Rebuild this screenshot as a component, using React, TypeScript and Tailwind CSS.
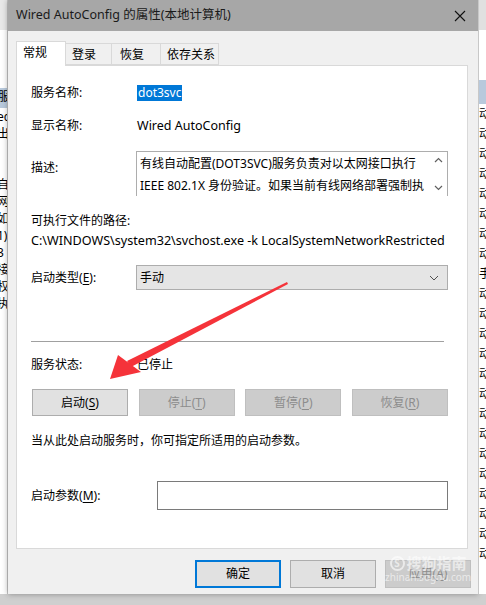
import React from "react";

const font = "font-['Noto_Sans','Noto_Sans_CJK_SC',sans-serif]";

function Key({ label, k }: { label: string; k: string }) {
  return (
    <>
      {label}(<span className="underline underline-offset-2">{k}</span>)
    </>
  );
}

function SvcButton({ children, disabled }: { children: React.ReactNode; disabled?: boolean }) {
  return (
    <div
      className={
        disabled
          ? "w-[96px] h-[27px] flex items-center justify-center bg-[#cccccc] border border-[#bfbfbf] text-[#8d8d8d]"
          : "w-[96px] h-[27px] flex items-center justify-center bg-[#e1e1e1] border border-[#adadad] text-black"
      }
    >
      {children}
    </div>
  );
}

const sideChars = ["服", "ec", "出", "", "", "自", "网", "如", "1)", "3", "接", "权", "执"];

export default function App() {
  return (
    <div className={`relative w-[486px] h-[605px] overflow-hidden bg-[#d6d6d6] text-[12px] text-black ${font}`}>
      <div className="flex h-[594px]">
        {/* window behind, left */}
        <div className="w-[8px] bg-white border-r border-[#c8c8c8] flex flex-col overflow-hidden text-[12px] leading-[17px]">
          <div className="h-[30px] bg-[#e8e8e8]" />
          <div className="h-[58px]" />
          <div className="h-[20px] bg-[#b8c9dc] -ml-[2px]">服</div>
          {sideChars.slice(1).map((c, i) => (
            <div key={i} className="-ml-[3px] whitespace-nowrap">{c || "\u00a0"}</div>
          ))}
        </div>

        {/* dialog */}
        <div className="w-[470px] flex flex-col bg-[#f0f0f0] shadow-[0_0_6px_rgba(0,0,0,0.35)]">
          <div className="h-[31px] bg-[#a7a7a7] flex items-center justify-between pl-[8px] pr-[8px] text-[12.5px] text-[#1a1a1a]">
            <span>Wired AutoConfig 的属性(本地计算机)</span>
            <svg width="12" height="12" viewBox="0 0 12 12" className="mr-[4px]">
              <path d="M1 1 L11 11 M11 1 L1 11" stroke="#111" strokeWidth="1.1" />
            </svg>
          </div>

          <div className="pl-[8px] pr-[10px] pt-[9px] flex flex-col">
            {/* tabs */}
            <div className="flex items-end h-[25px]">
              <div className="w-[50px] h-[25px] bg-white border border-b-0 border-[#d9d9d9] pl-[6px] pt-[2px] relative z-10 -mb-px">常规</div>
              <div className="w-[46px] h-[22px] border border-l-0 border-[#d9d9d9] pl-[6px] pt-[2px]">登录</div>
              <div className="w-[49px] h-[22px] border border-l-0 border-[#d9d9d9] pl-[8px] pt-[2px]">恢复</div>
              <div className="w-[58px] h-[22px] border border-l-0 border-[#d9d9d9] pl-[6px] pt-[2px]">依存关系</div>
            </div>

            {/* panel */}
            <div className="h-[484px] bg-white border border-[#d9d9d9] pl-[14px] pr-[19px] pt-[19px] flex flex-col">
              <div className="flex h-[16px] items-center">
                <div className="w-[106px]">服务名称:</div>
                <span className="bg-[#0078d7] text-white px-[1px] leading-[16px]">dot3svc</span>
              </div>
              <div className="flex h-[16px] items-center mt-[17px]">
                <div className="w-[106px]">显示名称:</div>
                <span className="text-[12.5px]">Wired AutoConfig</span>
              </div>
              <div className="flex mt-[17px]">
                <div className="w-[105px] pt-[8px]">描述:</div>
                <div className="flex-1 h-[45px] border border-[#adadad] border-b-0 flex overflow-hidden">
                  <div className="flex-1 pl-[3px] pt-[1px] leading-[22px] whitespace-nowrap overflow-hidden">
                    <div>有线自动配置(DOT3SVC)服务负责对以太网接口执行</div>
                    <div>IEEE 802.1X 身份验证。如果当前有线网络部署强制执</div>
                  </div>
                  <div className="w-[17px] flex flex-col items-center justify-between py-[5px]">
                    <svg width="9" height="6" viewBox="0 0 9 6">
                      <path d="M1 5 L4.5 1.5 L8 5" fill="none" stroke="#606060" strokeWidth="1.2" />
                    </svg>
                    <svg width="9" height="6" viewBox="0 0 9 6">
                      <path d="M1 1 L4.5 4.5 L8 1" fill="none" stroke="#606060" strokeWidth="1.2" />
                    </svg>
                  </div>
                </div>
              </div>
              <div className="h-[16px] flex items-center mt-[17px]">可执行文件的路径:</div>
              <div className="h-[16px] flex items-center mt-[4px] whitespace-nowrap text-[12.6px]">
                C:\WINDOWS\system32\svchost.exe -k LocalSystemNetworkRestricted
              </div>
              <div className="flex items-center mt-[16px]">
                <div className="w-[105px]">
                  <Key label="启动类型" k="E" />:
                </div>
                <div className="flex-1 h-[25px] bg-[#e5e5e5] border border-[#adadad] flex items-center justify-between pl-[3px] pr-[8px]">
                  <span>手动</span>
                  <svg width="10" height="6" viewBox="0 0 10 6">
                    <path d="M1 1 L5 5 L9 1" fill="none" stroke="#505050" strokeWidth="1" />
                  </svg>
                </div>
              </div>
              <div className="h-px bg-[#a0a0a0] mt-[51px] mr-[4px]" />
              <div className="flex h-[16px] items-center mt-[15px]">
                <div className="w-[106px]">服务状态:</div>
                <span>已停止</span>
              </div>
              <div className="flex justify-between mt-[16px] pl-px">
                <SvcButton><Key label="启动" k="S" /></SvcButton>
                <SvcButton disabled><Key label="停止" k="T" /></SvcButton>
                <SvcButton disabled><Key label="暂停" k="P" /></SvcButton>
                <SvcButton disabled><Key label="恢复" k="R" /></SvcButton>
              </div>
              <div className="h-[16px] flex items-center mt-[17px]">当从此处启动服务时，你可指定所适用的启动参数。</div>
              <div className="flex items-center mt-[32px]">
                <div className="w-[126px]">
                  <Key label="启动参数" k="M" />:
                </div>
                <div className="flex-1 h-[29px] border border-[#7a7a7a] bg-white" />
              </div>
            </div>

            {/* bottom buttons */}
            <div className="flex justify-end gap-[9px] mt-[11px] -mr-[3px]">
              <div className="w-[86px] h-[28px] flex items-center justify-center bg-[#e1e1e1] border-2 border-[#0078d7]">确定</div>
              <div className="w-[86px] h-[28px] flex items-center justify-center bg-[#e1e1e1] border border-[#adadad]">取消</div>
              <div className="w-[86px] h-[28px] flex items-center justify-center bg-[#cccccc] border border-[#bfbfbf] text-[#8d8d8d]">
                <Key label="应用" k="A" />
              </div>
            </div>
          </div>
        </div>

        {/* window behind, right */}
        <div className="w-[8px] bg-white border-l border-[#c8c8c8] flex flex-col overflow-hidden text-[12px] leading-[20px]">
          <div className="h-[30px] bg-[#e0e0e0]" />
          <div className="h-[50px]" />
          <div className="h-[24px] bg-[#b8c9dc]" />
          {Array.from({ length: 23 }).map((_, i) => (
            <div key={i} className="whitespace-nowrap">{i === 8 ? "手" : "动"}</div>
          ))}
        </div>
      </div>
      <div className="h-[11px] bg-[#cfcfcf]" />

      {/* red arrow annotation */}
      <svg className="absolute left-0 top-0 pointer-events-none" width="486" height="605">
        <polygon points="287,282 288,284 131,367 127,361" fill="#f5333a" />
        <polygon points="110,379 118,355 141,372" fill="#f5333a" />
      </svg>

      {/* watermark */}
      <div className="absolute left-[385px] top-[555px] flex flex-col items-center text-white/60 pointer-events-none">
        <div className="flex items-center gap-[2px] text-[15px] leading-[16px] font-bold">
          <span className="w-[15px] h-[15px] rounded-full border-2 border-white/60 text-[10px] leading-[11px] text-center">S</span>
          <span>搜狗指南</span>
        </div>
        <div className="text-[10px] leading-[12px]">zhinan.sogou.com</div>
      </div>
    </div>
  );
}
